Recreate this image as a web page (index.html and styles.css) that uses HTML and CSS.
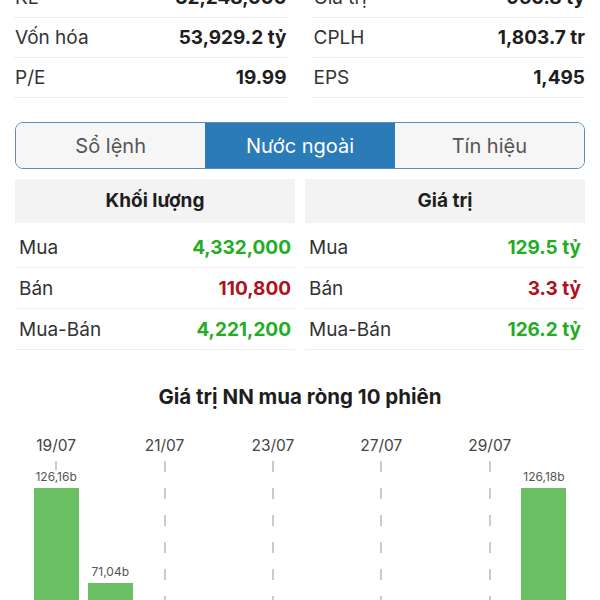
FILE: index.html
```html
<!DOCTYPE html>
<html lang="vi">
<head>
    <meta charset="UTF-8">
    <meta name="viewport" content="width=device-width, initial-scale=1.0">
    <title>Nước ngoài</title>
    <link rel="stylesheet" href="styles.css">
</head>
<body>
    <div class="page">
        <div class="stats">
            <div class="stats__col">
                <div class="stat"><span class="stat__label">KL</span><span class="stat__value">32,248,000</span></div>
                <div class="stat"><span class="stat__label">Vốn hóa</span><span class="stat__value">53,929.2 tỷ</span></div>
                <div class="stat"><span class="stat__label">P/E</span><span class="stat__value">19.99</span></div>
            </div>
            <div class="stats__col">
                <div class="stat"><span class="stat__label">Giá trị</span><span class="stat__value">960.8 tỷ</span></div>
                <div class="stat"><span class="stat__label">CPLH</span><span class="stat__value">1,803.7 tr</span></div>
                <div class="stat"><span class="stat__label">EPS</span><span class="stat__value">1,495</span></div>
            </div>
        </div>

        <div class="tabs">
            <div class="tab">Sổ lệnh</div>
            <div class="tab tab--active">Nước ngoài</div>
            <div class="tab">Tín hiệu</div>
        </div>

        <div class="foreign">
            <div class="ftable">
                <div class="ftable__head">Khối lượng</div>
                <div class="frow"><span>Mua</span><span class="up">4,332,000</span></div>
                <div class="frow"><span>Bán</span><span class="down">110,800</span></div>
                <div class="frow"><span>Mua-Bán</span><span class="up">4,221,200</span></div>
            </div>
            <div class="ftable">
                <div class="ftable__head">Giá trị</div>
                <div class="frow"><span>Mua</span><span class="up">129.5 tỷ</span></div>
                <div class="frow"><span>Bán</span><span class="down">3.3 tỷ</span></div>
                <div class="frow"><span>Mua-Bán</span><span class="up">126.2 tỷ</span></div>
            </div>
        </div>

        <h2 class="chart-title">Giá trị NN mua ròng 10 phiên</h2>
        <div class="chart" id="chart"></div>
    </div>

    <script>
        // giá trị mua ròng 10 phiên (tỷ)
        const sessions = [
            { date: '19/07', value: 126.16 },
            { date: '20/07', value: 71.04 },
            { date: '21/07', value: 35.2 },
            { date: '22/07', value: 28.6 },
            { date: '23/07', value: 12.4 },
            { date: '26/07', value: 40.1 },
            { date: '27/07', value: 22.7 },
            { date: '28/07', value: 18.3 },
            { date: '29/07', value: 30.5 },
            { date: '30/07', value: 126.18 }
        ]
        const scale = 1.7236
        const chart = document.getElementById('chart')

        sessions.forEach(function (s, i) {
            const slot = document.createElement('div')
            slot.className = 'slot' + (i % 2 === 0 ? ' slot--tick' : '')

            const date = document.createElement('div')
            date.className = 'slot__date'
            date.textContent = i % 2 === 0 ? s.date : ''

            const plot = document.createElement('div')
            plot.className = 'slot__plot'

            const label = document.createElement('div')
            label.className = 'slot__label'
            label.textContent = s.value.toFixed(2).replace('.', ',') + 'b'

            const bar = document.createElement('div')
            bar.className = 'slot__bar'
            bar.style.height = (s.value * scale).toFixed(1) + 'px'

            plot.appendChild(label)
            plot.appendChild(bar)
            slot.appendChild(date)
            slot.appendChild(plot)
            chart.appendChild(slot)
        })
    </script>
</body>
</html>
```

FILE: styles.css
```css
*{
    box-sizing: border-box;
}
body{
    margin: 0;
    background: #fff;
    font-family: Inter, "Liberation Sans", Arial, sans-serif;
    color: #222;
    overflow: hidden;
}
.page{
    width: 600px;
}

/* chỉ số cơ bản */
.stats{
    display: grid;
    grid-template-columns: 1fr 1fr;
    column-gap: 26px;
    padding: 0 15px 0 14px;
    margin-top: -22px;
}
.stat{
    height: 40px;
    display: flex;
    align-items: center;
    justify-content: space-between;
    border-bottom: 1px solid #ececec;
    padding-left: 1px;
    font-size: 19px;
}
.stat__label{
    color: #333;
}
.stat__value{
    font-weight: 700;
    color: #1e1e1e;
}

/* tabs */
.tabs{
    display: flex;
    height: 47px;
    margin: 24px 15px 0;
    border: 1.5px solid #5a8dba;
    border-radius: 8px;
    overflow: hidden;
}
.tab{
    flex: 1;
    display: flex;
    align-items: center;
    justify-content: center;
    background: #f6f6f6;
    color: #555;
    font-size: 20px;
}
.tab--active{
    background: #2a7bb8;
    color: #fff;
}

/* nước ngoài */
.foreign{
    display: grid;
    grid-template-columns: 1fr 1fr;
    column-gap: 10px;
    padding: 0 15px;
    margin-top: 10px;
}
.ftable__head{
    height: 44px;
    line-height: 44px;
    background: #f3f3f3;
    text-align: center;
    font-weight: 700;
    font-size: 19px;
    color: #1e1e1e;
}
.frow{
    height: 41px;
    display: flex;
    align-items: center;
    justify-content: space-between;
    padding: 0 4px;
    border-bottom: 1px solid #efefef;
    font-size: 19px;
    color: #333;
}
.ftable__head + .frow{
    height: 45px;
    padding-top: 4px;
}
.up{
    color: #22ad24;
    font-weight: 700;
}
.down{
    color: #b0121b;
    font-weight: 700;
}

/* biểu đồ */
.chart-title{
    margin: 34px 0 0;
    text-align: center;
    font-size: 20.5px;
    line-height: 26px;
    font-weight: 700;
    color: #1e1e1e;
}
.chart{
    display: flex;
    padding: 0 29px;
    margin-top: 26px;
}
.slot{
    flex: 1;
    display: flex;
    flex-direction: column;
    align-items: center;
}
.slot__date{
    height: 20px;
    line-height: 20px;
    font-size: 15.5px;
    color: #444;
}
.slot__plot{
    position: relative;
    width: 100%;
    height: 249px;
    display: flex;
    flex-direction: column;
    align-items: center;
    justify-content: flex-end;
}
.slot--tick .slot__plot::before{
    content: '';
    position: absolute;
    top: 5px;
    bottom: 0;
    left: 50%;
    width: 2px;
    margin-left: -1px;
    background: repeating-linear-gradient(to bottom, #cbcbcb 0 11px, transparent 11px 27px);
}
.slot__label{
    position: relative;
    font-size: 12px;
    line-height: 14px;
    color: #555;
    margin-bottom: 4px;
    background: #fff;
}
.slot__bar{
    position: relative;
    width: 45px;
    background: #6bbf63;
}
```
